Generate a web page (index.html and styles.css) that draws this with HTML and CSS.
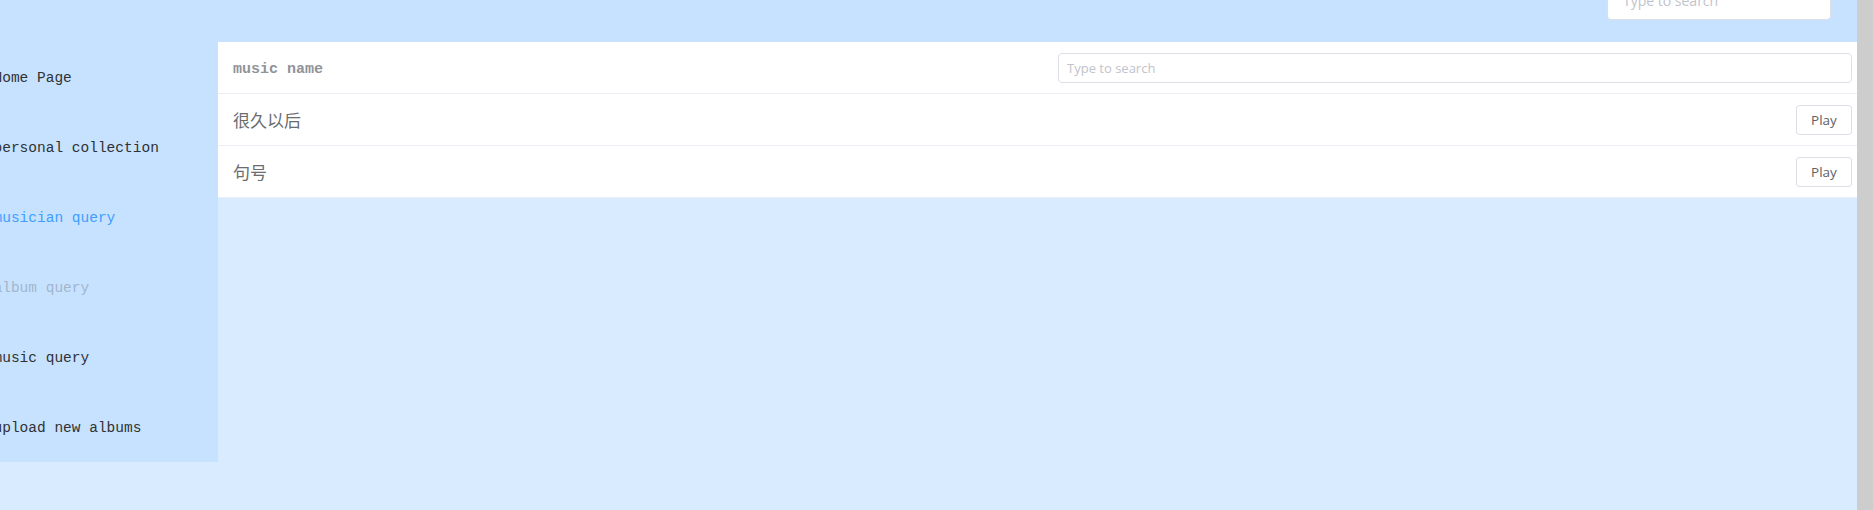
FILE: index.html
```html
<!DOCTYPE html>
<html>
<head>
<meta charset="utf-8">
<link rel="stylesheet" href="styles.css">
</head>
<body>
<div class="page">
  <div class="app">
    <header class="topbar">
      <input class="top-search" type="text" placeholder="Type to search">
    </header>
    <div class="body">
      <aside class="aside">
        <ul class="menu">
          <li class="item">Home Page</li>
          <li class="item">personal collection</li>
          <li class="item active">musician query</li>
          <li class="item disabled">album query</li>
          <li class="item">music query</li>
          <li class="item">upload new albums</li>
        </ul>
      </aside>
      <main class="main">
        <div class="table">
          <div class="row head">
            <div class="cell name-head">music name</div>
            <div class="cell ops"><input class="tbl-search" type="text" placeholder="Type to search"></div>
          </div>
          <div class="row">
            <div class="cell name">很久以后</div>
            <div class="cell ops"><button class="play">Play</button></div>
          </div>
          <div class="row">
            <div class="cell name">句号</div>
            <div class="cell ops"><button class="play">Play</button></div>
          </div>
        </div>
      </main>
    </div>
  </div>
  <div class="scrollbar"></div>
</div>
</body>
</html>
```
FILE: styles.css
```css
html, body {
  margin: 0;
  padding: 0;
  height: 100%;
  overflow: hidden;
}
body {
  background: #d9ecff;
  font-family: "Liberation Mono", monospace;
}
.page {
  display: flex;
  height: 510px;
}
.app {
  flex: 1;
  display: flex;
  flex-direction: column;
  background: #d9ecff;
  min-width: 0;
}
.scrollbar {
  width: 16px;
  background: #cdcdcd;
}
.topbar {
  height: 42px;
  background: #c6e2ff;
  display: flex;
  justify-content: flex-end;
  align-items: flex-start;
  padding-right: 26px;
}
.top-search {
  box-sizing: border-box;
  width: 224px;
  height: 40px;
  margin-top: -20px;
  border: 1px solid #dcdfe6;
  border-radius: 4px;
  background: #fff;
  padding: 0 15px;
  font-family: "Open Sans", sans-serif;
  font-size: 14px;
  color: #606266;
  outline: none;
}
.top-search::placeholder { color: #c0c4cc; }
.body {
  display: flex;
  align-items: flex-start;
}
.aside {
  width: 218px;
  height: 420px;
  background: #c6e2ff;
  flex: none;
  overflow: hidden;
}
.menu {
  list-style: none;
  margin: 0;
  padding: 0;
}
.item {
  height: 68px;
  padding-top: 2px;
  line-height: 68px;
  font-size: 14.5px;
  color: #303133;
  margin-left: -6.5px;
  white-space: nowrap;
}
.item.active { color: #409eff; }
.item.disabled { opacity: 0.25; }
.main {
  flex: 1;
  min-width: 0;
}
.table {
  background: #fff;
}
.row {
  display: flex;
  align-items: center;
  height: 51px;
  border-bottom: 1px solid #ebeef5;
  padding: 0 5px 0 15px;
}
.cell { flex: none; }
.ops {
  margin-left: auto;
  display: flex;
  align-items: center;
}
.name-head {
  font-family: "Liberation Mono", monospace;
  font-weight: bold;
  font-size: 15px;
  color: #909399;
  padding-top: 3px;
}
.name {
  font-family: "Noto Sans CJK SC", sans-serif;
  font-size: 17px;
  color: #6a6c70;
}
.tbl-search {
  box-sizing: border-box;
  width: 794px;
  height: 30px;
  border: 1px solid #dcdfe6;
  border-radius: 4px;
  background: #fff;
  padding: 0 8px;
  font-family: "Open Sans", sans-serif;
  font-size: 13px;
  color: #606266;
  outline: none;
}
.tbl-search::placeholder { color: #c0c4cc; }
.play {
  box-sizing: border-box;
  width: 56px;
  height: 30px;
  margin-top: 1px;
  border: 1px solid #dcdfe6;
  border-radius: 3px;
  background: #fff;
  color: #606266;
  font-family: "Open Sans", sans-serif;
  font-size: 13.5px;
  padding: 0;
}
```
